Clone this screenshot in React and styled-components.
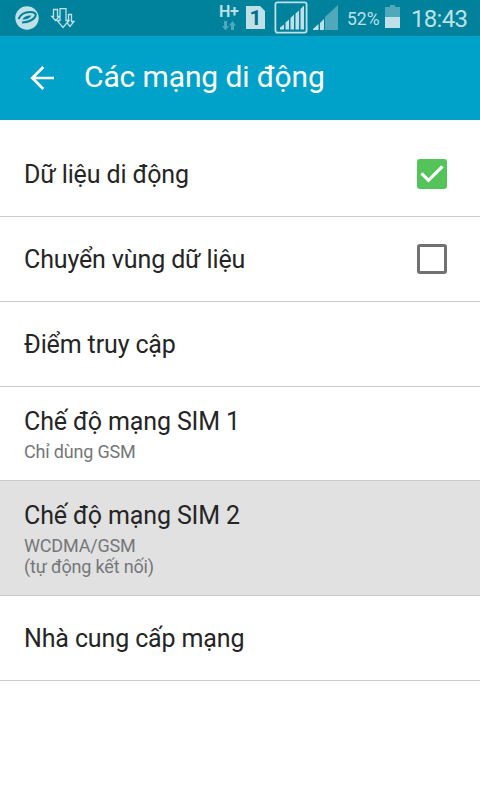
// Mobile network settings screen
// Status bar, title bar and the list of network preferences

import React from 'react';
import styled, { createGlobalStyle } from 'styled-components';

const GlobalStyle = createGlobalStyle`
  * {
    box-sizing: border-box;
  }

  body {
    margin: 0;
    background: #fff;
    font-family: Roboto, 'Noto Sans', sans-serif;
  }
`;

const Screen = styled.div`
  width: 480px;
  height: 800px;
  overflow: hidden;
  background: #fff;
`;

const StatusBar = styled.div`
  display: flex;
  align-items: flex-start;
  height: 36px;
  background: #00829d;
  color: #bfe0e7;
`;

const StatusIcon = styled.svg`
  flex: none;
  display: block;
  width: ${props => props.$width}px;
  height: 36px;
  margin-left: ${props => props.$gap || 0}px;
`;

const NetworkType = styled.div`
  width: 21px;
  height: 36px;
  margin-left: 143px;
  padding-top: 3px;
  font-size: 16px;
  font-weight: 600;
  letter-spacing: -0.3px;
  line-height: 18px;
  white-space: nowrap;
`;

const Arrows = styled.svg`
  display: block;
  width: 20px;
  height: 10px;
`;

const SimCard = styled.div`
  width: 19px;
  height: 23px;
  margin: 6px 0 0 6px;
  background: #bfe0e7;
  clip-path: polygon(0 0, 14px 0, 100% 5px, 100% 100%, 0 100%);
  color: #00708a;
  font-size: 21px;
  font-weight: 700;
  line-height: 24px;
  text-align: center;
`;

const Percent = styled.span`
  width: 34px;
  margin-left: 8px;
  font-size: 17.5px;
  line-height: 38px;
  white-space: nowrap;
`;

const Clock = styled.span`
  margin-left: 10px;
  font-size: 24px;
  letter-spacing: -0.7px;
  line-height: 38px;
`;

const TitleBar = styled.header`
  display: flex;
  align-items: center;
  height: 84px;
  padding-left: 30px;
  background: #01a2c9;
  color: #fff;
`;

const BackArrow = styled.svg`
  width: 24px;
  height: 24px;
  margin-right: 30px;
`;

const Title = styled.h1`
  margin: 0;
  padding-bottom: 2px;
  font-size: 30px;
  font-weight: 400;
  letter-spacing: -0.12px;
  line-height: 36px;
`;

const List = styled.ul`
  margin: 0;
  padding: 12px 0 0;
  list-style: none;
`;

const ListItem = styled.li`
  display: flex;
  align-items: center;
  justify-content: space-between;
  height: ${props => props.$height || 85}px;
  padding: 0 33px 0 24px;
  border-bottom: 1px solid #cbcbcb;
  background: ${props => props.$pressed ? '#e1e1e1' : '#fff'};
`;

const Label = styled.div`
  padding-top: 2px;
  color: #252525;
  font-size: 25px;
  letter-spacing: -0.13px;
  line-height: 30px;
`;

const Summary = styled.div`
  margin-top: 4px;
  padding-bottom: 1px;
  color: #747779;
  font-size: 18px;
  letter-spacing: -0.18px;
  line-height: 21px;
  white-space: pre-line;
`;

const Checkbox = styled.span`
  display: block;
  width: 30px;
  height: 30px;
  border: ${props => props.$checked ? 'none' : '3px solid #717171'};
  border-radius: 3px;
  background: ${props => props.$checked ? '#54c45a' : '#fff'};
`;

const items = [
  { label: 'Dữ liệu di động', checked: true },
  { label: 'Chuyển vùng dữ liệu', checked: false },
  { label: 'Điểm truy cập' },
  { label: 'Chế độ mạng SIM 1', summary: 'Chỉ dùng GSM', height: 94 },
  { label: 'Chế độ mạng SIM 2', summary: 'WCDMA/GSM\n(tự động kết nối)', height: 115, pressed: true },
  { label: 'Nhà cung cấp mạng' },
];

const Status = () => (
  <StatusBar>
    <StatusIcon $width={24} $gap={15} viewBox="0 0 24 36">
      <circle cx="12" cy="18" r="11.7" fill="#bfe0e7" />
      <path
        d="M3.500 19C5.500 14.500 10 12 15 12C19.500 12 21.500 13.500 20.500 16C19.500 19 14.500 22 7 22.500"
        fill="none"
        stroke="#00829d"
        strokeWidth="2.200"
      />
      <path d="M7.500 19.500C9 16.500 12 15 16.500 15.500C14.500 18.500 11.500 20 7.500 19.500Z" fill="#00829d" />
    </StatusIcon>
    <StatusIcon $width={26} $gap={11} viewBox="0 0 26 36" fill="#00829d" stroke="#bfe0e7" strokeWidth="1.3">
      <path d="M3.500 9.500H7.500V16.500H9.500L5.500 20.500L1.800 16.500H3.500Z" />
      <path d="M18.500 14.500H21.500V21.500H24L20 26.500L16 21.500H18.500Z" />
      <path d="M10 8.600H16V20.500H19L13 27.400L7 20.500H10Z" />
    </StatusIcon>
    <NetworkType>
      H+
      <Arrows viewBox="0 0 20 10" fill="#4fa9bb">
        <path d="M5 0H8V5H10L6.500 9.500L3 5H5ZM12 9H15V4.500H17L13.500 0L10 4.500H12Z" />
      </Arrows>
    </NetworkType>
    <SimCard>1</SimCard>
    <StatusIcon $width={34} $gap={9} viewBox="0 0 34 36">
      <rect x="1.400" y="2.400" width="31.200" height="30.200" rx="2" fill="none" stroke="#bfe0e7" strokeWidth="1.800" />
      <path d="M6 29.500V27.500L10 24.500V29.500ZM11.500 29.500V22.500L15 19.500V29.500ZM16.500 29.500V18L20 14.500V29.500ZM21.500 29.500V13.500L25 10.500V29.500ZM26.500 29.500V9L30 5.500V29.500Z" fill="#bfe0e7" />
    </StatusIcon>
    <StatusIcon $width={26} $gap={5} viewBox="0 0 26 36">
      <path d="M12 30V17L25 5V30Z" fill="#4fa9bb" />
      <path d="M0 30V29L5.500 24V30ZM7 30V23L11 19V30Z" fill="#bfe0e7" />
    </StatusIcon>
    <Percent>52%</Percent>
    <StatusIcon $width={16} $gap={4} viewBox="0 0 16 36">
      <path d="M0 7H5V5H10V7H15V17H0Z" fill="#4fa9bb" />
      <path d="M0 17H15V28H0Z" fill="#bfe0e7" />
    </StatusIcon>
    <Clock>18:43</Clock>
  </StatusBar>
);

const App = () => (
  <Screen>
    <GlobalStyle />
    <Status />
    <TitleBar>
      <BackArrow viewBox="0 0 24 24" fill="none" stroke="#fff" strokeWidth="2.700">
        <path d="M24 12H2.500M13.300 1L2.300 12L13.300 23" />
      </BackArrow>
      <Title>Các mạng di động</Title>
    </TitleBar>
    <List>
      {items.map(item => (
        <ListItem key={item.label} $height={item.height} $pressed={item.pressed}>
          <div>
            <Label>{item.label}</Label>
            {item.summary && <Summary>{item.summary}</Summary>}
          </div>
          {item.checked !== undefined && (
            <Checkbox $checked={item.checked}>
              {item.checked && (
                <svg width="30" height="30" viewBox="0 0 30 30" fill="none" stroke="#fff" strokeWidth="3.200">
                  <path d="M4.500 14.300L11.500 21.300L25.500 7.300" />
                </svg>
              )}
            </Checkbox>
          )}
        </ListItem>
      ))}
    </List>
  </Screen>
);

export default App;
